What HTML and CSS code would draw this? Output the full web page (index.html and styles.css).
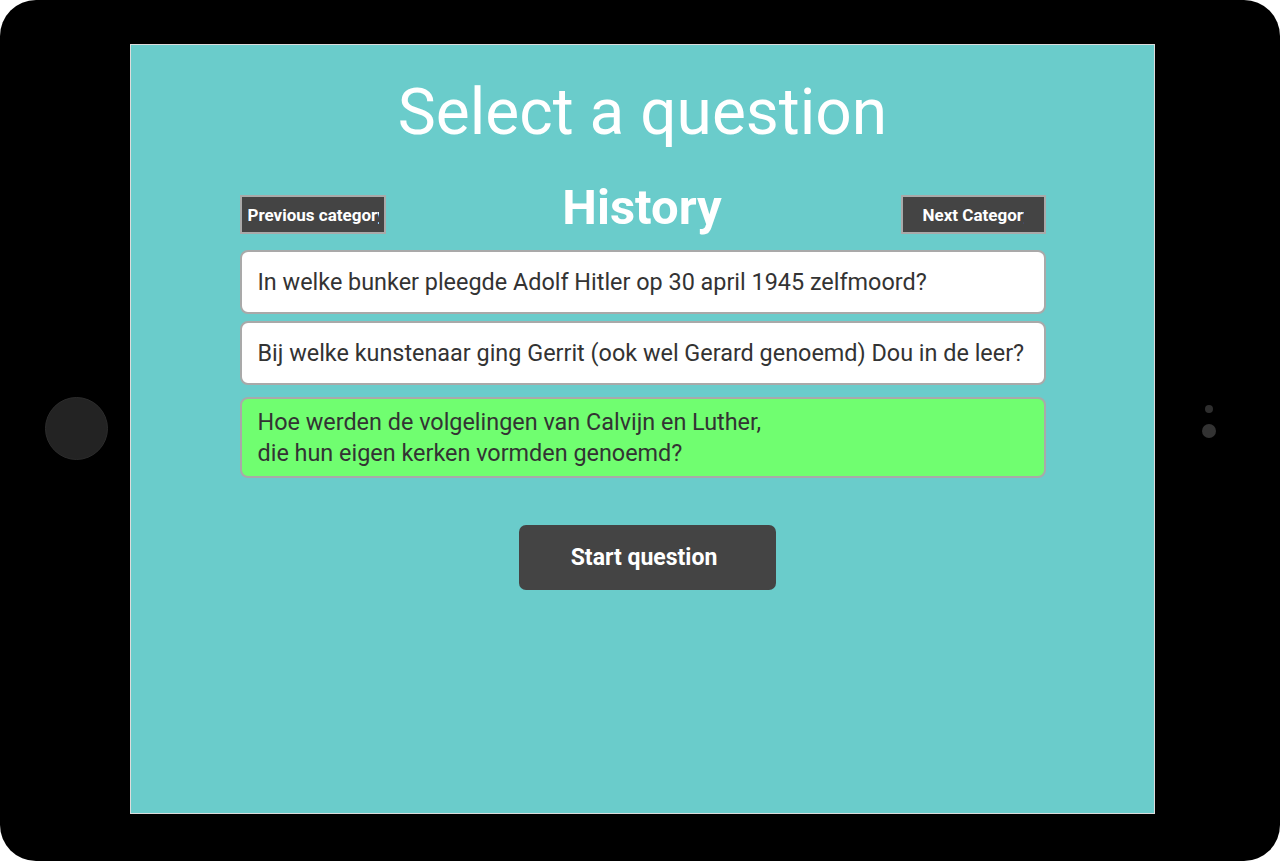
FILE: index.html
```html
<!DOCTYPE html>
<html>
<head>
<meta charset="utf-8">
<link rel="stylesheet" href="styles.css">
</head>
<body>
<div class="device">
  <div class="side side-left">
    <div class="home-btn"></div>
  </div>
  <div class="screen">
    <h1 class="title">Select a question</h1>
    <div class="content">
      <div class="cat-row">
        <button class="cat-btn"><span class="cat-label">Previous category</span></button>
        <h2 class="cat-name">History</h2>
        <button class="cat-btn cat-next"><span class="cat-label">Next Category</span></button>
      </div>
      <div class="question">In welke bunker pleegde Adolf Hitler op 30 april 1945 zelfmoord?</div>
      <div class="question">Bij welke kunstenaar ging Gerrit (ook wel Gerard genoemd) Dou in de leer?</div>
      <div class="question selected">Hoe werden de volgelingen van Calvijn en Luther,<br>die hun eigen kerken vormden genoemd?</div>
      <div class="start-wrap">
        <button class="start-btn">Start question</button>
      </div>
    </div>
  </div>
  <div class="side side-right">
    <div class="cam-small"></div>
    <div class="cam-big"></div>
  </div>
</div>
</body>
</html>
```
FILE: styles.css
```css
html, body {
  margin: 0;
  padding: 0;
  background: #fff;
}
body {
  font-family: Roboto, "Liberation Sans", sans-serif;
}
.device {
  width: 1280px;
  height: 861px;
  background: #000;
  border-radius: 36px;
  display: flex;
  align-items: flex-start;
  box-sizing: border-box;
  padding-top: 44px;
}
.side {
  height: 770px;
  display: flex;
  flex-direction: column;
  align-items: center;
  justify-content: center;
}
.side-left {
  width: 130px;
}
.home-btn {
  width: 61px;
  height: 61px;
  border-radius: 50%;
  background: #232323;
  border: 1px solid #2c2c2c;
  margin-left: 22px;
  margin-top: -2px;
}
.side-right {
  width: 125px;
  align-items: flex-start;
  padding-left: 49px;
  box-sizing: border-box;
  gap: 11px;
}
.cam-small {
  width: 8px;
  height: 8px;
  border-radius: 50%;
  background: #2e2e2e;
  margin-left: 1px;
  margin-top: -16px;
}
.cam-big {
  width: 14px;
  height: 14px;
  border-radius: 50%;
  background: #333;
  margin-left: -2px;
}
.screen {
  width: 1025px;
  height: 770px;
  box-sizing: border-box;
  border: 1px solid #dcdcdc;
  background: #6acccb;
  display: flex;
  flex-direction: column;
  align-items: center;
}
.title {
  margin: 32px 0 0;
  font-size: 64px;
  font-weight: 400;
  color: #fff;
  line-height: 72px;
}
.content {
  width: 806px;
  margin-top: 46px;
  display: flex;
  flex-direction: column;
}
.cat-row {
  display: flex;
  justify-content: space-between;
  align-items: flex-start;
  height: 55px;
}
.cat-btn {
  width: 146px;
  height: 39px;
  box-sizing: border-box;
  border: 2px solid #a9a9a9;
  background: #444;
  color: #fff;
  font-family: Roboto, "Liberation Sans", sans-serif;
  font-weight: 700;
  font-size: 17px;
  padding: 0 5px 0 6px;
  text-align: left;
}
.cat-label {
  display: block;
  white-space: nowrap;
  overflow: hidden;
}
.cat-next {
  width: 145px;
  padding: 0 20px;
}
.cat-name {
  margin: -19px 2px 0 0;
  font-size: 49px;
  font-weight: 700;
  color: #fff;
  line-height: 64px;
}
.question {
  box-sizing: border-box;
  background: #fff;
  border: 2px solid #a9a9a9;
  border-radius: 8px;
  color: #333;
  font-size: 23.4px;
  line-height: 31px;
  padding: 15px 16px 14px;
  margin-bottom: 7px;
}
.question.selected {
  background: #70fe70;
  margin-top: 5px;
  padding: 8px 16px 7px;
}
.start-wrap {
  display: flex;
  justify-content: center;
  margin-top: 40px;
  padding-left: 9px;
}
.start-btn {
  width: 257px;
  height: 65px;
  border: none;
  border-radius: 7px;
  background: #444;
  color: #fff;
  font-family: Roboto, "Liberation Sans", sans-serif;
  font-weight: 700;
  font-size: 23px;
  padding: 0 6px 0 0;
}
```
